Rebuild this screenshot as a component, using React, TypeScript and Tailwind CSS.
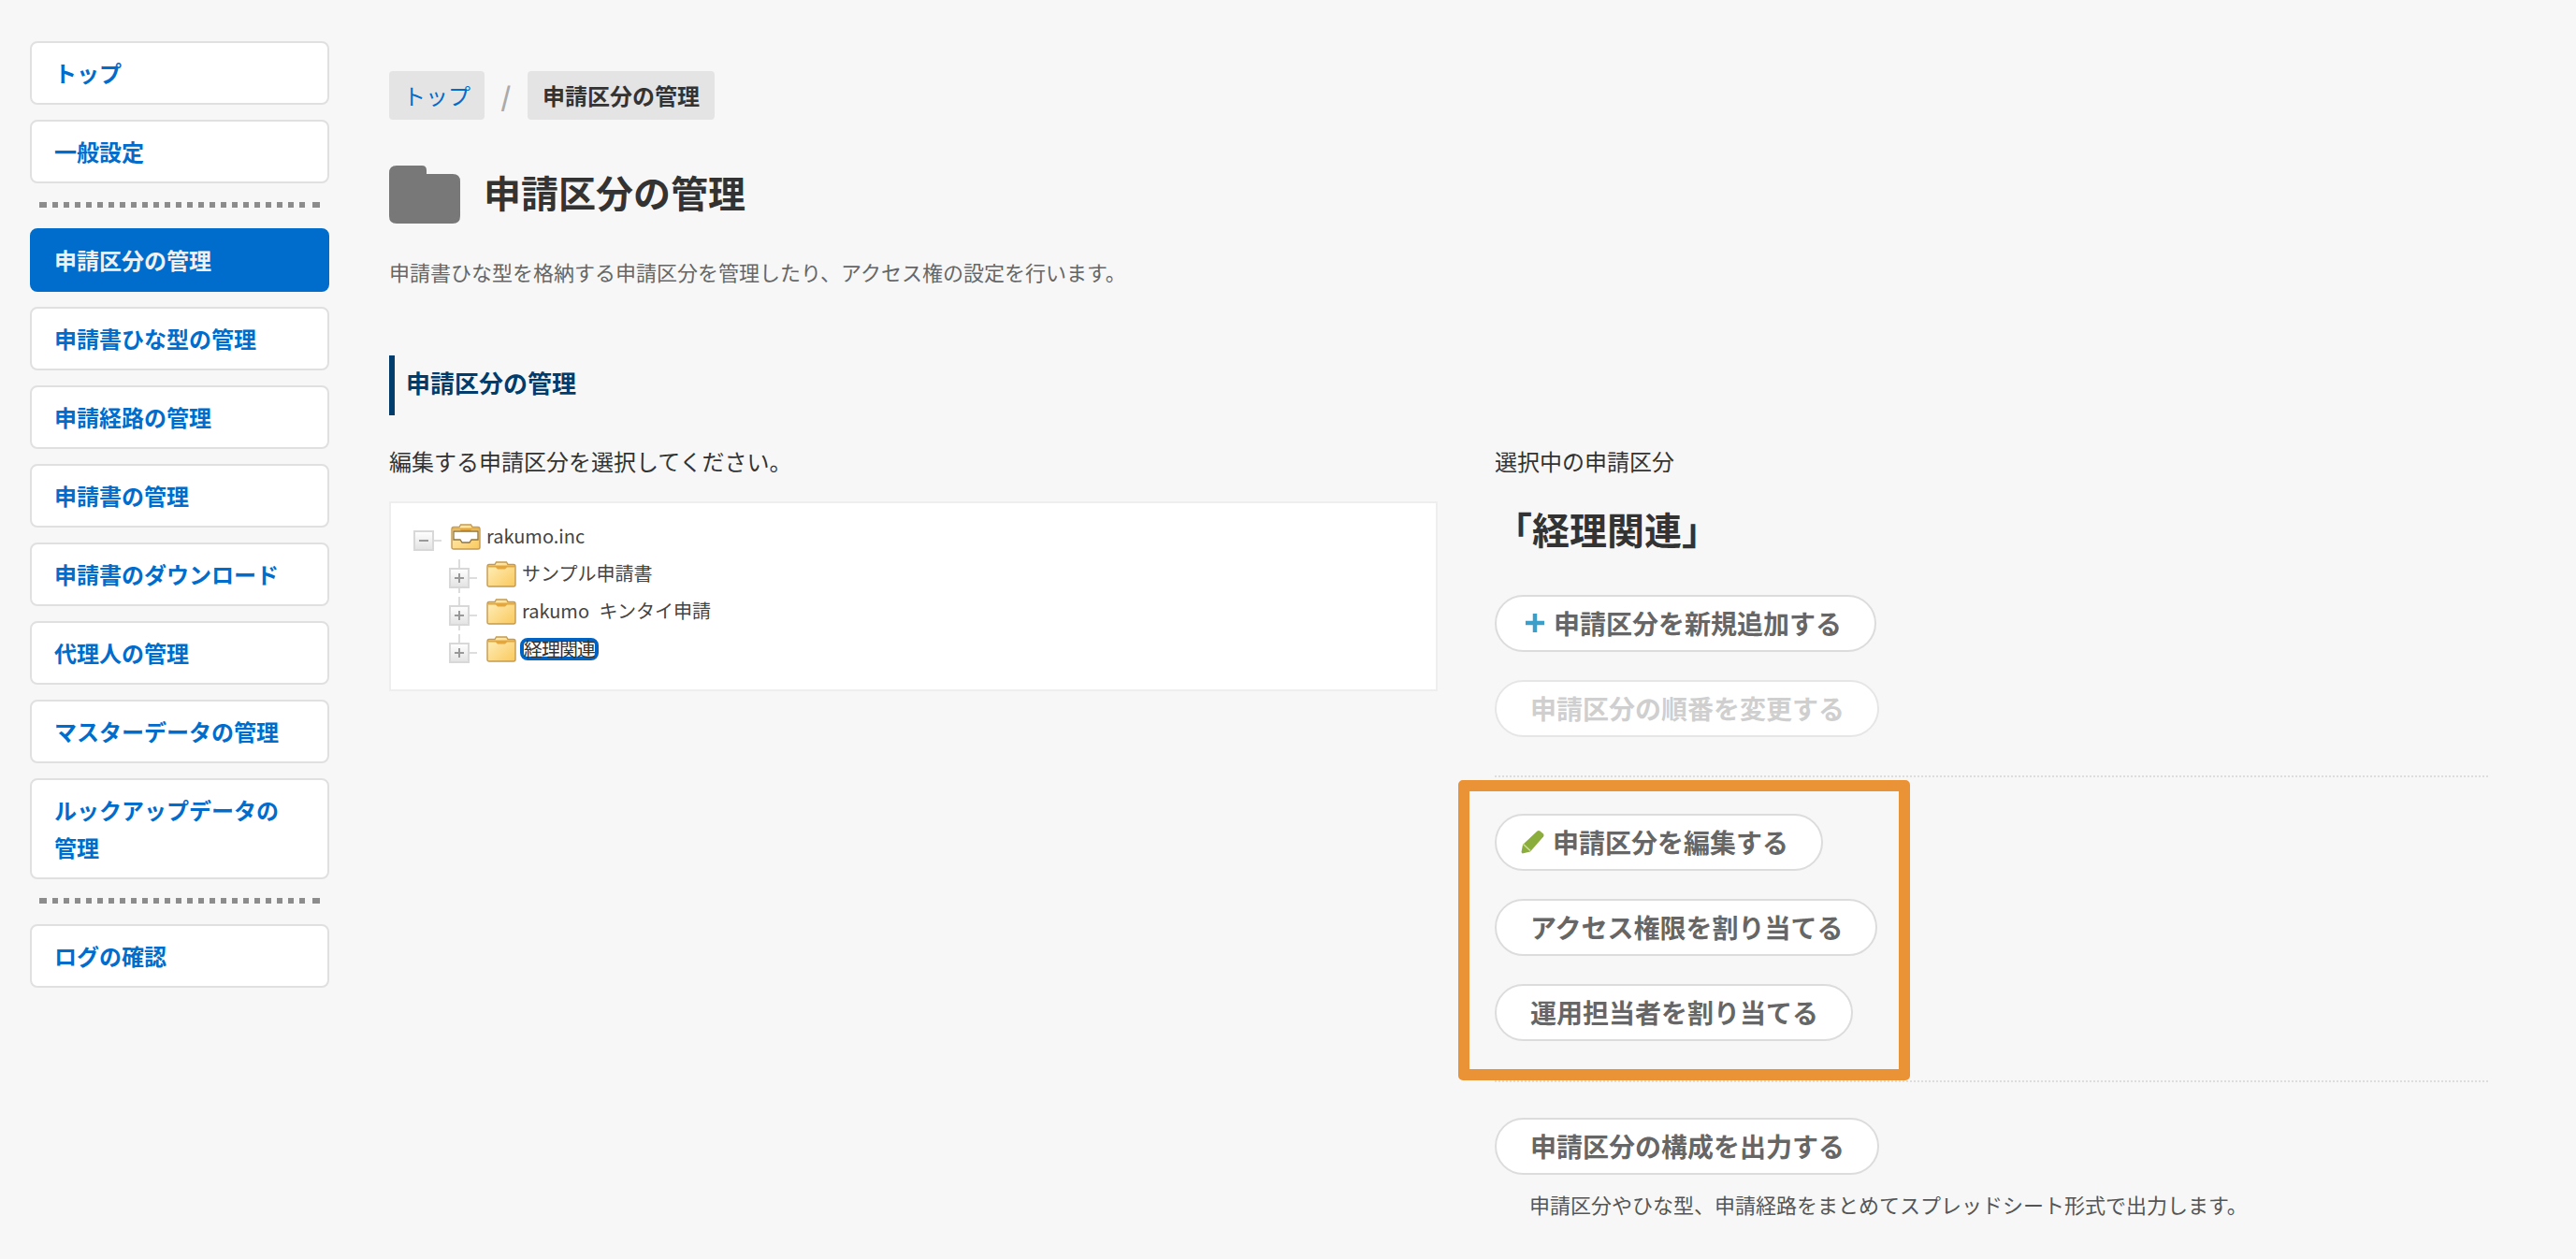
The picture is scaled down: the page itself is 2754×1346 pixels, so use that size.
import type { ReactNode } from "react";

const jp = "font-['Noto_Sans_CJK_JP',sans-serif]";

function Dots() {
  return (
    <div className="flex ml-[10px] w-[300px] h-[6px] gap-[6px]">
      <span className="w-[8px] bg-[#8c8c8c]" />
      {Array.from({ length: 23 }).map((_, i) => (
        <span key={i} className="w-[6px] bg-[#8c8c8c]" />
      ))}
      <span className="w-[8px] ml-auto bg-[#8c8c8c]" />
    </div>
  );
}

function NavItem({ label, active }: { label: ReactNode; active?: boolean }) {
  return (
    <a
      className={
        active
          ? "block rounded-[8px] border-2 border-[#006dcc] bg-[#006dcc] px-6 py-3 text-[24px] leading-[40px] font-bold text-[#f0f0f0]"
          : "block rounded-[8px] border-2 border-[#e0e0e0] bg-white px-6 py-3 text-[24px] leading-[40px] font-bold text-[#006dcc]"
      }
    >
      {label}
    </a>
  );
}

function Sidebar() {
  return (
    <nav className="w-[320px] shrink-0 flex flex-col gap-4">
      <NavItem label="トップ" />
      <NavItem label="一般設定" />
      <div className="pt-[4px] pb-[6px]"><Dots /></div>
      <NavItem label="申請区分の管理" active />
      <NavItem label="申請書ひな型の管理" />
      <NavItem label="申請経路の管理" />
      <NavItem label="申請書の管理" />
      <NavItem label="申請書のダウンロード" />
      <NavItem label="代理人の管理" />
      <NavItem label="マスターデータの管理" />
      <NavItem label={<>ルックアップデータの<br />管理</>} />
      <div className="pt-[4px] pb-[6px]"><Dots /></div>
      <NavItem label="ログの確認" />
    </nav>
  );
}

function Toggle({ open, up, down }: { open?: boolean; up?: boolean; down?: boolean }) {
  return (
    <svg width="30" height="40" viewBox="0 0 30 40" className="shrink-0">
      <defs>
        <linearGradient id="tg" x1="0" y1="0" x2="0" y2="1">
          <stop offset="0" stopColor="#ffffff" />
          <stop offset="1" stopColor="#e2e2e2" />
        </linearGradient>
      </defs>
      {up && <path d="M11 4v9" stroke="#dcdcdc" strokeWidth="2" />}
      {down && <path d="M11 34v6" stroke="#dcdcdc" strokeWidth="2" />}
      <rect x="1" y="14" width="20" height="20" fill="url(#tg)" stroke="#d8d8d8" strokeWidth="2" />
      <path d="M6 24h10" stroke="#999" strokeWidth="2" />
      {!open && <path d="M11 19v10" stroke="#999" strokeWidth="2" />}
      <path d="M22 24h8" stroke="#dddddd" strokeWidth="2" />
    </svg>
  );
}

function TreeFolder({ open }: { open?: boolean }) {
  return (
    <svg width="32" height="28" viewBox="0 0 32 28" className="shrink-0">
      <defs>
        <linearGradient id="fg" x1="0" y1="0" x2="1" y2="1">
          <stop offset="0" stopColor="#fff0c0" />
          <stop offset="1" stopColor="#fac95c" />
        </linearGradient>
      </defs>
      <path d="M1 6q0-2.500 2-2.500h6l1.500-2.500h11l1.500 2.500h6q2 0 2 2.500v19q0 2-2 2h-26q-2 0-2-2z" fill="url(#fg)" stroke="#c39a50" strokeWidth="1.400" />
      <path d="M2 4.500h28v2h-8l-2 2h-8l-2-2h-8z" fill="#e6a63a" />
      {open && <path d="M3 8h26v9h-7l-2 3h-8l-2-3h-7z" fill="#ffffff" stroke="#8f7440" strokeWidth="1.300" />}
    </svg>
  );
}

function Row({ label, selected, root, up, down }: { label: string; selected?: boolean; root?: boolean; up?: boolean; down?: boolean }) {
  return (
    <div className={root ? "flex items-center h-[40px] ml-[24px]" : "flex items-center h-[40px] ml-[62px]"}>
      <Toggle open={root} up={up} down={down} />
      <span className="w-[10px] shrink-0" />
      <TreeFolder open={root} />
      {selected ? (
        <span className="ml-[4px] rounded-[8px] border-[4px] border-[#0063c4] bg-white text-[20px] leading-[16px] tracking-[-1px] text-[#333]">{label}</span>
      ) : (
        <span className="ml-[6px] mb-[2px] text-[20px] leading-[32px] [word-spacing:6px] text-[#444]">{label}</span>
      )}
    </div>
  );
}

function Pill({ label, icon, disabled, className }: { label: string; icon?: ReactNode; disabled?: boolean; className: string }) {
  return (
    <a
      className={
        "flex items-center h-[61px] pb-[2px] rounded-full border-2 bg-white text-[28px] font-bold leading-[40px] " +
        (disabled ? "border-[#e6e6e6] text-[#cfcfcf] " : "border-[#dcdcdc] text-[#666] ") +
        className
      }
    >
      {icon}
      {label}
    </a>
  );
}

export default function App() {
  return (
    <div className={"h-[1346px] overflow-hidden bg-[#f7f7f7] flex pl-[32px] pt-[44px] " + jp}>
      <Sidebar />
      <main className="ml-[64px] w-[2244px] pt-[32px] text-[#333]">
        <div className="flex items-center h-[52px]">
          <a className="w-[102px] h-[52px] rounded-[4px] bg-[#e4e4e4] text-center text-[24px] leading-[52px] text-[#006dcc]">トップ</a>
          <span className="w-[46px] text-center text-[28px] font-bold text-[#aaa]">/</span>
          <span className="h-[52px] rounded-[4px] bg-[#e4e4e4] px-4 text-[24px] leading-[52px] font-bold text-[#333]">申請区分の管理</span>
        </div>

        <div className="flex items-center mt-[49px] h-[62px]">
          <svg width="76" height="62" viewBox="0 0 76 62" className="shrink-0">
            <path d="M0 8q0-8 8-8h27q5 0 5 5v4h28q8 0 8 8v37q0 8-8 8h-60q-8 0-8-8z" fill="#787878" />
          </svg>
          <h1 className="ml-[25px] pb-[6px] text-[40px] leading-[60px] font-bold text-[#333]">申請区分の管理</h1>
        </div>

        <p className="mt-[35px] text-[22px] leading-[32px] text-[#666]">申請書ひな型を格納する申請区分を管理したり、アクセス権の設定を行います。</p>

        <h2 className="mt-[74px] h-[64px] border-l-[6px] border-[#003c6c] pl-[12px] text-[26px] leading-[58px] font-bold text-[#003c6c]">申請区分の管理</h2>

        <div className="flex mt-[29px]">
          <section className="w-[1121px] shrink-0">
            <p className="h-[40px] text-[24px] leading-[40px] text-[#333]">編集する申請区分を選択してください。</p>
            <div className="mt-[23px] h-[203px] border-2 border-[#eeeeee] bg-white pt-[16px]">
              <Row root label="rakumo.inc" />
              <Row up down label="サンプル申請書" />
              <Row up down label="rakumo キンタイ申請" />
              <Row up selected label="経理関連" />
            </div>
          </section>

          <section className="relative ml-[61px] w-[1062px] shrink-0">
            <p className="h-[40px] text-[24px] leading-[40px] text-[#333]">選択中の申請区分</p>
            <h3 className="mt-[22px] h-[60px] text-[40px] leading-[60px] font-bold text-[#333]">「経理関連」</h3>
            <div className="mt-[41px] flex flex-col items-start gap-[30px]">
              <Pill
                className="w-[408px] pl-[30px]"
                label="申請区分を新規追加する"
                icon={
                  <svg width="22" height="22" viewBox="0 0 22 22" className="mr-[9px] shrink-0">
                    <path d="M11 1v20M1 11h20" stroke="#3c9fc9" strokeWidth="4.500" />
                  </svg>
                }
              />
              <Pill disabled className="w-[411px] pl-[36px]" label="申請区分の順番を変更する" />
            </div>
            <div className="mt-[41px] border-t-2 border-dotted border-[#dddddd]" />
            <div className="mt-[39px] flex flex-col items-start gap-[30px]">
              <Pill
                className="w-[351px] pl-[26px]"
                label="申請区分を編集する"
                icon={
                  <svg width="26" height="26" viewBox="0 0 26 26" className="mr-[8px] shrink-0">
                    <path d="M17.500 1.500q1.500-1 3 0l3.500 3q1.200 1.500 0 3l-14 16-8.500 2-1-1.500 1.500-8z" fill="#8aad3c" />
                    <path d="M2.500 15.500l7.500 7" stroke="#cfe0a0" strokeWidth="1.500" />
                  </svg>
                }
              />
              <Pill className="w-[409px] pl-[36px]" label="アクセス権限を割り当てる" />
              <Pill className="w-[383px] pl-[36px]" label="運用担当者を割り当てる" />
            </div>
            <div className="mt-[42px] border-t-2 border-dotted border-[#dddddd]" />
            <div className="mt-[38px]">
              <Pill className="w-[411px] pl-[36px]" label="申請区分の構成を出力する" />
              <p className="mt-[15px] ml-[37px] text-[22px] leading-[32px] text-[#555]">申請区分やひな型、申請経路をまとめてスプレッドシート形式で出力します。</p>
            </div>
            <div className="absolute left-[-39px] top-[361px] h-[321px] w-[483px] rounded-[5px] border-[12px] border-[#ea9236]" />
          </section>
        </div>
      </main>
    </div>
  );
}
